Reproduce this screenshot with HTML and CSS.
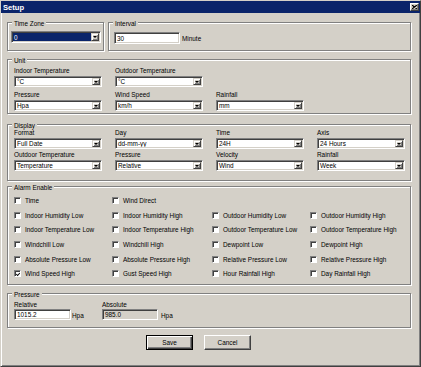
FILE: index.html
```html
<!DOCTYPE html>
<html>
<head>
<meta charset="utf-8">
<link rel="stylesheet" href="styles.css">
</head>
<body>
<div class="window">
  <div class="titlebar">
    <span class="title">Setup</span>
    <span class="close"><svg width="5" height="4" viewBox="0 0 5 4"><path d="M0 0 L5 4 M5 0 L0 4" stroke="#000" stroke-width="1.2"/></svg></span>
  </div>
  <div class="content">
    <div class="row1">
      <fieldset class="group tz"><legend>Time Zone</legend>
        <div class="tz-body">
          <div class="combo big sel"><span class="val">0</span><span class="arrow"><i></i></span></div>
        </div>
      </fieldset>
      <fieldset class="group interval"><legend>Interval</legend>
        <div class="interval-body">
          <div class="edit big">30</div><span class="unit-text">Minute</span>
        </div>
      </fieldset>
    </div>

    <fieldset class="group unit"><legend>Unit</legend>
      <div class="grid unit-grid">
        <div class="field"><div class="lbl">Indoor Temperature</div><div class="combo"><span class="val">°C</span><span class="arrow"><i></i></span></div></div>
        <div class="field"><div class="lbl">Outdoor Temperature</div><div class="combo"><span class="val">°C</span><span class="arrow"><i></i></span></div></div>
        <div class="field c1"><div class="lbl">Pressure</div><div class="combo"><span class="val">Hpa</span><span class="arrow"><i></i></span></div></div>
        <div class="field"><div class="lbl">Wind Speed</div><div class="combo"><span class="val">km/h</span><span class="arrow"><i></i></span></div></div>
        <div class="field"><div class="lbl">Rainfall</div><div class="combo"><span class="val">mm</span><span class="arrow"><i></i></span></div></div>
      </div>
    </fieldset>

    <fieldset class="group display"><legend>Display</legend>
      <div class="grid display-grid">
        <div class="field"><div class="lbl">Format</div><div class="combo"><span class="val">Full Date</span><span class="arrow"><i></i></span></div></div>
        <div class="field"><div class="lbl">Day</div><div class="combo"><span class="val">dd-mm-yy</span><span class="arrow"><i></i></span></div></div>
        <div class="field"><div class="lbl">Time</div><div class="combo"><span class="val">24H</span><span class="arrow"><i></i></span></div></div>
        <div class="field"><div class="lbl">Axis</div><div class="combo"><span class="val">24 Hours</span><span class="arrow"><i></i></span></div></div>
        <div class="field"><div class="lbl">Outdoor Temperature</div><div class="combo"><span class="val">Temperature</span><span class="arrow"><i></i></span></div></div>
        <div class="field"><div class="lbl">Pressure</div><div class="combo"><span class="val">Relative</span><span class="arrow"><i></i></span></div></div>
        <div class="field"><div class="lbl">Velocity</div><div class="combo"><span class="val">Wind</span><span class="arrow"><i></i></span></div></div>
        <div class="field"><div class="lbl">Rainfall</div><div class="combo"><span class="val">Week</span><span class="arrow"><i></i></span></div></div>
      </div>
    </fieldset>

    <fieldset class="group alarm"><legend>Alarm Enable</legend>
      <div class="alarm-grid">
        <label class="chk"><span class="box"></span>Time</label>
        <label class="chk"><span class="box"></span>Wind Direct</label>
        <span></span><span></span>
        <label class="chk"><span class="box"></span>Indoor Humidity Low</label>
        <label class="chk"><span class="box"></span>Indoor Humidity High</label>
        <label class="chk"><span class="box"></span>Outdoor Humidity Low</label>
        <label class="chk"><span class="box"></span>Outdoor Humidity High</label>
        <label class="chk"><span class="box"></span>Indoor Temperature Low</label>
        <label class="chk"><span class="box"></span>Indoor Temperature High</label>
        <label class="chk"><span class="box"></span>Outdoor Temperature Low</label>
        <label class="chk"><span class="box"></span>Outdoor Temperature High</label>
        <label class="chk"><span class="box"></span>Windchill Low</label>
        <label class="chk"><span class="box"></span>Windchill High</label>
        <label class="chk"><span class="box"></span>Dewpoint Low</label>
        <label class="chk"><span class="box"></span>Dewpoint High</label>
        <label class="chk"><span class="box"></span>Absolute Pressure Low</label>
        <label class="chk"><span class="box"></span>Absolute Pressure High</label>
        <label class="chk"><span class="box"></span>Relative Pressure Low</label>
        <label class="chk"><span class="box"></span>Relative Pressure High</label>
        <label class="chk"><span class="box"><svg width="5" height="5" viewBox="0 0 5 5"><path d="M0.3 2 L2 3.8 L4.8 0.6" fill="none" stroke="#000" stroke-width="1.3"/></svg></span>Wind Speed High</label>
        <label class="chk"><span class="box"></span>Gust Speed High</label>
        <label class="chk"><span class="box"></span>Hour Rainfall High</label>
        <label class="chk"><span class="box"></span>Day Rainfall High</label>
      </div>
    </fieldset>

    <fieldset class="group pressure"><legend>Pressure</legend>
      <div class="pressure-body">
        <div class="pfield rel">
          <div class="lbl">Relative</div>
          <div class="prow"><div class="edit pin">1015.2</div><span class="hpa">Hpa</span></div>
        </div>
        <div class="pfield abs">
          <div class="lbl">Absolute</div>
          <div class="prow"><div class="edit pin disabled">985.0</div><span class="hpa wide">Hpa</span></div>
        </div>
      </div>
    </fieldset>

    <div class="buttons">
      <button class="btn default">Save</button>
      <button class="btn">Cancel</button>
    </div>
  </div>
</div>
</body>
</html>
```

FILE: styles.css
```css
* { box-sizing: border-box; }

body {
  margin: 0;
  background: #D4D0C8;
  font-family: "Liberation Sans", Arial, sans-serif;
  font-size: 6.4px;
  color: #000;
}

.window {
  width: 421px;
  height: 367px;
  border: 1px solid;
  border-color: #D4D0C8 #404040 #404040 #D4D0C8;
  box-shadow: inset 1px 1px #fff, inset -1px -1px #808080;
  background: #D4D0C8;
}

.titlebar {
  height: 12px;
  background: #0A246A;
  display: flex;
  align-items: center;
  justify-content: space-between;
  padding: 0 1px 0 2px;
  color: #fff;
  font-weight: bold;
  font-size: 7.6px;
}

.close {
  width: 9px;
  height: 8px;
  background: #D4D0C8;
  border: 1px solid;
  border-color: #fff #404040 #404040 #fff;
  box-shadow: inset -1px -1px #808080;
  display: flex;
  align-items: center;
  justify-content: center;
}
.close svg { display: block; }

.content {
  padding: 5px 9px 0 6px;
  display: flex;
  flex-direction: column;
}

.group {
  margin: 0;
  padding: 0;
  border: 1px solid #808080;
  box-shadow: inset 1px 1px #fff, 1px 1px #fff;
  min-width: 0;
}

.group legend {
  margin-left: 4px;
  padding: 2px 2px 0;
  line-height: 7px;
  background: #D4D0C8;
}

.row1 {
  display: flex;
  gap: 4px;
}
.tz { width: 97px; flex: none; }
.interval { flex: 1; }

.tz-body { padding: 4px 1px 7px 3px; }
.interval-body {
  padding: 5px 0 6px 5px;
  display: flex;
  align-items: center;
  gap: 2px;
}

/* combo box */
.combo {
  display: flex;
  height: 11px;
  background: #fff;
  border: 1px solid;
  border-color: #808080 #fff #fff #808080;
  box-shadow: inset 1px 1px #404040, inset -1px -1px #D4D0C8;
  padding: 1px;
}
.combo.big { height: 12px; width: 90px; }
.combo .val {
  flex: 1;
  display: flex;
  align-items: center;
  padding-left: 1px;
  white-space: nowrap;
  overflow: hidden;
}
.combo.sel .val {
  background: #0A246A;
  color: #fff;
}
.combo .arrow {
  width: 8px;
  flex: none;
  background: #D4D0C8;
  border: 1px solid;
  border-color: #D4D0C8 #404040 #404040 #D4D0C8;
  box-shadow: inset 1px 1px #fff, inset -1px -1px #808080;
  display: flex;
  align-items: center;
  justify-content: center;
}
.combo .arrow i {
  display: block;
  width: 0;
  height: 0;
  border-left: 2px solid transparent;
  border-right: 2px solid transparent;
  border-top: 2px solid #000;
}

/* edit box */
.edit {
  height: 12px;
  background: #fff;
  border: 1px solid;
  border-color: #808080 #fff #fff #808080;
  box-shadow: inset 1px 1px #404040, inset -1px -1px #D4D0C8;
  padding: 0 2px;
  display: flex;
  align-items: center;
}
.edit.big { width: 66px; }
.edit.disabled { background: #D4D0C8; }

.grid {
  display: grid;
  grid-template-columns: repeat(4, 88px);
  column-gap: 13px;
}
.lbl {
  line-height: 8px;
  white-space: nowrap;
}
.field .combo { margin-top: 1px; }

.unit-grid {
  padding: 3px 0 2px 6px;
  row-gap: 4px;
}
.unit-grid .c1 { grid-column: 1; }

.display-grid {
  padding: 0 0 9px 6px;
  row-gap: 2px;
}

.group.unit { margin-top: 4px; }
.group.display { margin-top: 6px; }
.group.alarm { margin-top: 1px; }
.group.pressure { margin-top: 4px; }

.alarm-grid {
  display: grid;
  grid-template-columns: 98px 100px 98px 1fr;
  grid-auto-rows: 14.7px;
  padding: 2px 0 3px 6px;
}
.chk {
  display: flex;
  align-items: center;
  gap: 4px;
  white-space: nowrap;
}
.box {
  width: 7px;
  height: 7px;
  flex: none;
  background: #fff;
  border: 1px solid;
  border-color: #808080 #fff #fff #808080;
  box-shadow: inset 1px 1px #404040;
  display: flex;
  align-items: center;
  justify-content: center;
}
.box svg { display: block; margin: 1px 0 0 1px; }

.pressure-body {
  display: flex;
  padding: 3px 0 7px 6px;
}
.pfield.rel { width: 88px; }
.prow {
  display: flex;
  align-items: center;
}
.edit.pin { height: 11px; }
.rel .edit.pin { width: 57px; }
.abs .edit.pin { width: 56px; }
.hpa { margin-left: 1px; margin-top: 2px; }
.hpa.wide { margin-left: 3px; }

.buttons {
  display: flex;
  gap: 11px;
  margin-top: 7px;
  padding-left: 139px;
}
.btn {
  width: 47px;
  height: 15px;
  padding: 0;
  font: inherit;
  color: #000;
  background: #D4D0C8;
  border: 1px solid;
  border-color: #fff #404040 #404040 #fff;
  box-shadow: inset -1px -1px #808080;
}
.btn.default {
  border: 1px solid #000;
  box-shadow: inset 1px 1px #fff, inset -1px -1px #404040, inset -2px -2px #808080;
}
```
